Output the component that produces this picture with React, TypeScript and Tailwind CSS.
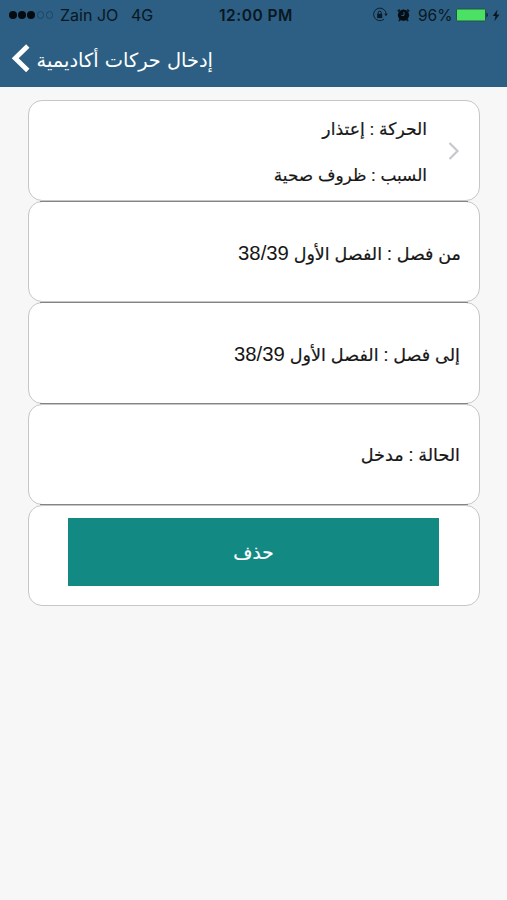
import type { ReactNode } from "react";

function Dots() {
  return (
    <div className="flex h-[30px] w-[46px] items-center gap-[1.7px]">
      <i className="size-[7.5px] rounded-full bg-[#050b10]" />
      <i className="size-[7.5px] rounded-full bg-[#050b10]" />
      <i className="size-[7.5px] rounded-full bg-[#050b10]" />
      <i className="size-[7.5px] rounded-full border border-[#1d4460]" />
      <i className="size-[7.5px] rounded-full border border-[#1d4460]" />
    </div>
  );
}

function StatusBar() {
  return (
    <div className="flex h-[30px] items-center whitespace-nowrap pl-[9px] text-[16px] leading-[30px] text-[#091722]">
      <Dots />
      <span className="ml-[5px] w-[71px]">Zain JO</span>
      <span className="w-[88px]">4G</span>
      <span className="w-[153px] pt-px text-[15.5px] font-semibold tracking-[0.5px]">12:00 PM</span>
      <svg className="h-[16px] w-[16px] shrink-0" viewBox="0 0 16 16" fill="none" stroke="#0a1924">
        <path d="M12 12.2A6.3 6.3 0 1 1 14.2 7" strokeWidth="0.9" />
        <path d="M12.3 6.8h3.4L14 9.2z" fill="#0a1924" stroke="none" />
        <rect x="5.2" y="6.8" width="5" height="4.3" fill="#0a1924" stroke="none" />
        <path d="M6.2 7V5.7a1.5 1.5 0 0 1 3 0V7" />
      </svg>
      <svg className="ml-[8px] h-[14px] w-[15px] shrink-0" viewBox="0 0 15 14">
        <circle cx="7.5" cy="7.2" r="5.6" fill="#050d14" />
        <path d="M1.8 3.4 3.8 1.6M13.2 3.4l-2-1.8M4 11.6 2.9 13M11 11.6l1.1 1.4" stroke="#091722" strokeWidth="1.7" />
        <path d="M8 4v3.4H5.4" fill="none" stroke="#2c5f83" strokeWidth="1" />
      </svg>
      <span className="ml-[7px] w-[36px] pt-px text-[15.5px]">96%</span>
      <svg className="ml-px h-[14px] w-[34px] shrink-0" viewBox="0 0 34 14">
        <rect x="1.5" y="1" width="29" height="12" rx="1" fill="#4be164" stroke="#245546" />
        <path d="M31.5 4.5q2.5 2.5 0 5z" fill="#091722" />
      </svg>
      <svg className="ml-[3px] h-[13px] w-[8px] shrink-0" viewBox="0 0 8 13">
        <path d="M5.5.5.8 7h2.7L2.4 12.3 7.5 5.6H4.6z" fill="#091722" />
      </svg>
    </div>
  );
}

function Card({ children }: { children: ReactNode }) {
  return (
    <section className="h-[101.2px] rounded-[14px] border border-[#c6c6c6] bg-white">
      {children}
    </section>
  );
}

function Divider() {
  return <div className="relative z-10 mx-[12px] -my-[0.5px] h-px bg-[#858585]" />;
}

export default function App() {
  return (
    <main className="h-[900px] w-[507px] overflow-hidden bg-[#f7f7f7] font-['Inter','DejaVu_Sans',sans-serif] text-[#161616]">
      <header className="h-[87px] bg-[#2c5f83]">
        <StatusBar />
        <div className="flex h-[57px] items-center pl-[11px] text-white">
          <svg className="h-[30px] w-[20px]" viewBox="0 0 20 30">
            <path d="M16.8 2 4.2 14.2 16.8 26.5" fill="none" stroke="white" strokeWidth="4.8" />
          </svg>
          <h1 dir="rtl" className="ml-[6px] w-[176px] whitespace-nowrap pt-[4px] font-['DejaVu_Sans',sans-serif] text-[19.4px]">
            إدخال حركات أكاديمية
          </h1>
        </div>
      </header>
      <div
        dir="rtl"
        className="ml-[28px] mt-[13px] w-[452px] whitespace-nowrap font-['Liberation_Sans','DejaVu_Sans',sans-serif] text-[17.5px] [-webkit-text-stroke:0.2px_currentColor]"
      >
        <Card>
          <div className="flex h-full items-center pr-[19px]">
            <svg className="h-[18px] w-[12px]" viewBox="0 0 12 18">
              <path d="m1.5 1 8 8-8 8" fill="none" stroke="#c7c7cc" strokeWidth="2.2" />
            </svg>
            <div className="mr-[21px] flex flex-col gap-[17px] pt-[3px] leading-[30px]">
              <p className="text-[17.2px]">الحركة : إعتذار</p>
              <p className="text-[16.9px]">السبب : ظروف صحية</p>
            </div>
          </div>
        </Card>
        <Divider />
        <Card>
          <p className="flex h-full items-center pr-[18px] pt-[2px]">
            <span>من فصل : الفصل الأول <bdi className="text-[20.3px] [-webkit-text-stroke:0]">38/39</bdi></span>
          </p>
        </Card>
        <Divider />
        <Card>
          <p className="flex h-full items-center pr-[19px] pt-[2px] text-[17.6px]">
            <span>إلى فصل : الفصل الأول <bdi className="text-[20.3px] [-webkit-text-stroke:0]">38/39</bdi></span>
          </p>
        </Card>
        <Divider />
        <Card>
          <p className="flex h-full items-center pr-[19px] pt-[3px] text-[17.6px]">الحالة : مدخل</p>
        </Card>
        <Divider />
        <Card>
          <button className="mr-[40px] mt-[12px] block h-[68px] w-[371px] bg-[#128983] pt-[3px] text-[18.5px] text-white">حذف</button>
        </Card>
      </div>
    </main>
  );
}
